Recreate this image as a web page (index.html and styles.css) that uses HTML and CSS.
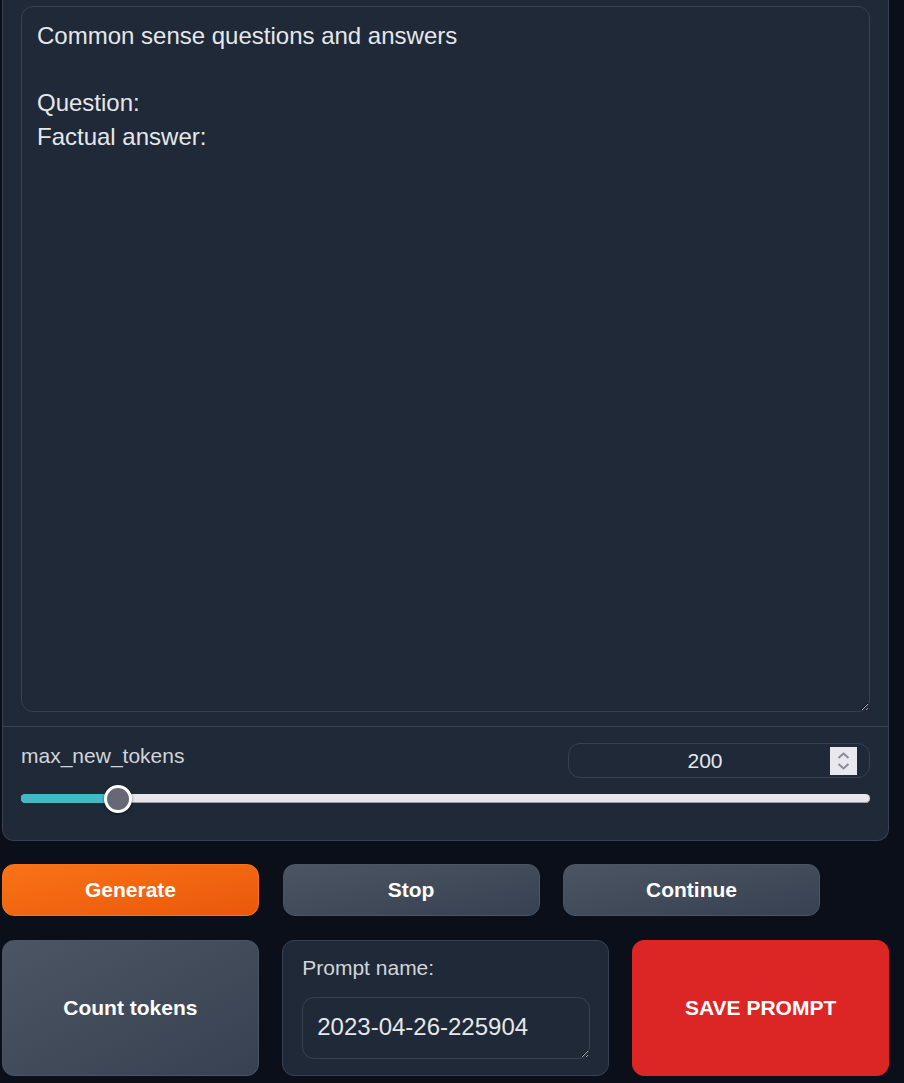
FILE: index.html
```html
<!DOCTYPE html>
<html>
<head>
<meta charset="utf-8">
<link rel="stylesheet" href="styles.css">
</head>
<body>
<div class="page">
  <div class="panel">
    <div class="prompt-block">
      <textarea class="prompt" readonly>Common sense questions and answers

Question:
Factual answer:
</textarea>
    </div>
    <div class="slider-block">
      <div class="slider-head">
        <span class="slider-label">max_new_tokens</span>
        <div class="num-input">
          <span class="num-value">200</span>
          <span class="spinner">
            <svg width="27" height="28" viewBox="0 0 27 28"><path d="M8.5 11 L13.5 6.5 L18.5 11" fill="none" stroke="#8d8b9b" stroke-width="2"/><path d="M8.5 17 L13.5 21.5 L18.5 17" fill="none" stroke="#8d8b9b" stroke-width="2"/></svg>
          </span>
        </div>
      </div>
      <div class="slider">
        <div class="track">
          <div class="fill" style="width: 96px"></div>
        </div>
        <div class="thumb" style="left: 83px"></div>
      </div>
    </div>
  </div>

  <div class="btn-row">
    <button class="btn primary">Generate</button>
    <button class="btn secondary">Stop</button>
    <button class="btn secondary">Continue</button>
  </div>

  <div class="bottom-row">
    <button class="btn secondary tall">Count tokens</button>
    <div class="name-box">
      <div class="name-label">Prompt name:</div>
      <textarea class="name-input" readonly>2023-04-26-225904</textarea>
    </div>
    <button class="btn danger tall">SAVE PROMPT</button>
  </div>
</div>
</body>
</html>
```

FILE: styles.css
```css
html, body {
  margin: 0;
  padding: 0;
  background: #0b0f19;
  font-family: "Liberation Sans", Arial, sans-serif;
}

.page {
  padding-left: 2px;
  width: 887px;
}

.panel {
  background: #1f2937;
  border: 1px solid #374151;
  border-top: none;
  border-radius: 0 0 12px 12px;
}

.prompt-block {
  padding: 6px 18px 14px 18px;
  border-bottom: 1px solid #374151;
}

textarea {
  display: block;
  box-sizing: border-box;
  font-family: "Liberation Sans", Arial, sans-serif;
  color: #e5e7eb;
  background: #1f2937;
  border: 1px solid #374151;
  border-radius: 12px;
  outline: none;
  resize: vertical;
  color-scheme: dark;
  overflow: hidden;
}

.prompt {
  width: 849px;
  height: 706px;
  font-size: 24px;
  line-height: 33.6px;
  padding: 12px 15px;
}

.slider-block {
  padding: 16px 18px 27px 18px;
}

.slider-head {
  display: flex;
  justify-content: space-between;
  align-items: flex-start;
}

.slider-label {
  font-size: 21px;
  line-height: 26px;
  color: #d1d5db;
}

.num-input {
  box-sizing: border-box;
  width: 302px;
  height: 35px;
  border: 1px solid #374151;
  border-radius: 12px;
  background: #1f2937;
  display: flex;
  align-items: center;
  position: relative;
  padding-right: 28px;
}

.num-value {
  flex: 1;
  text-align: center;
  font-size: 21px;
  color: #e5e7eb;
}

.spinner {
  position: absolute;
  right: 12px;
  top: 3px;
  width: 27px;
  height: 28px;
  background: #e9e8ee;
  display: block;
}

.spinner svg {
  display: block;
}

.slider {
  position: relative;
  height: 28px;
  margin-top: 7px;
}

.track {
  position: absolute;
  left: 0;
  right: 0;
  top: 9px;
  height: 9px;
  border-radius: 5px;
  background: #e7e6ec;
  box-shadow: inset 0 -1px 0 #9a99a6;
  overflow: hidden;
}

.fill {
  height: 100%;
  background: #3fbac6;
}

.thumb {
  position: absolute;
  top: 0;
  box-sizing: border-box;
  width: 28px;
  height: 28px;
  border-radius: 50%;
  background: #686775;
  border: 3px solid #ffffff;
  box-shadow: 0 1px 3px rgba(0, 0, 0, 0.5);
}

.btn {
  box-sizing: border-box;
  font-family: "Liberation Sans", Arial, sans-serif;
  font-weight: bold;
  font-size: 21px;
  color: #ffffff;
  border-radius: 12px;
  cursor: pointer;
  padding: 0;
}

.primary {
  background: linear-gradient(to bottom right, #f97316, #ea580c);
  border: 1px solid #f97316;
}

.secondary {
  background: linear-gradient(to bottom right, #4b5563, #374151);
  border: 1px solid #4b5563;
}

.danger {
  background: #dc2626;
  border: 1px solid #dc2626;
}

.btn-row {
  display: flex;
  gap: 23.5px;
  margin-top: 23px;
}

.btn-row .btn {
  width: 257px;
  height: 52px;
}

.bottom-row {
  display: flex;
  gap: 23.5px;
  margin-top: 24px;
}

.tall {
  height: 136px;
}

.bottom-row .btn.secondary {
  width: 257px;
}

.bottom-row .btn.danger {
  width: 257px;
}

.name-box {
  box-sizing: border-box;
  width: 326.5px;
  height: 136px;
  background: #1f2937;
  border: 1px solid #374151;
  border-radius: 12px;
  padding: 14px 18px 15px 19px;
}

.name-label {
  font-size: 21px;
  line-height: 26px;
  color: #d1d5db;
}

.name-input {
  margin-top: 16px;
  width: 288px;
  height: 62px;
  font-size: 24px;
  line-height: 33.6px;
  padding: 12px 14px;
}
```
